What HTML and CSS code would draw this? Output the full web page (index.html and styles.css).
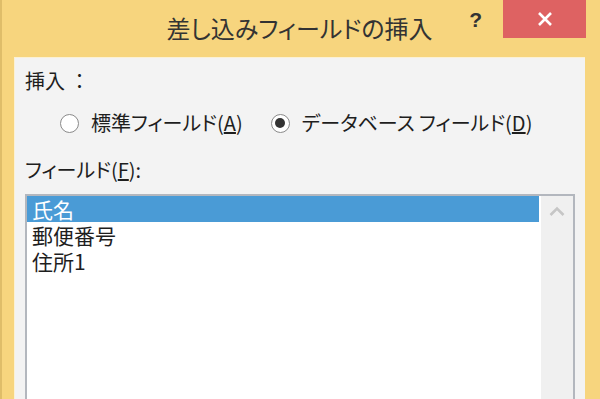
FILE: index.html
```html
<!DOCTYPE html>
<html lang="ja">
<head>
    <meta charset="UTF-8">
    <title>差し込みフィールドの挿入</title>
    <link rel="stylesheet" href="styles.css">
</head>
<body>
    <div class="window">
        <div class="titlebar">
            <div></div>
            <div class="title">差し込みフィールドの挿入</div>
            <div class="controls">
                <span class="help">?</span>
                <span class="close">
                    <svg width="16" height="14" viewBox="0 0 16 14">
                        <path d="M2 1 L14 13 M14 1 L2 13" stroke="#fff" stroke-width="2.6" fill="none"/>
                    </svg>
                </span>
            </div>
        </div>

        <div class="panel">
            <div class="group-label">挿入 ：</div>
            <div class="radios">
                <label class="radio"><span class="circle"></span><span>標準フィールド(<u>A</u>)</span></label>
                <label class="radio checked"><span class="circle"></span><span>データベース フィールド(<u>D</u>)</span></label>
            </div>
            <div class="field-label">フィールド(<u>F</u>):</div>
            <div class="listbox">
                <ul class="items">
                    <li class="selected">氏名</li>
                    <li>郵便番号</li>
                    <li>住所1</li>
                </ul>
                <div class="scrollbar">
                    <svg width="16" height="10" viewBox="0 0 16 10">
                        <polyline points="1.5,9 8,2.5 14.5,9" stroke="#c6c6c6" stroke-width="2.6" fill="none"/>
                    </svg>
                </div>
            </div>
        </div>
    </div>
</body>
</html>
```

FILE: styles.css
```css
body {
    margin: 0;
    font-family: "Noto Sans CJK JP", "Liberation Sans", sans-serif;
    font-feature-settings: "palt";
    color: #1e1e1e;
    overflow: hidden;
}

.window {
    width: 600px;
    height: 399px;
    box-sizing: border-box;
    padding: 0 15px 0 14px;
    display: flex;
    flex-direction: column;
    background-color: #f7d57e;
    box-shadow: inset 2px 0 0 #dfbd69;
    overflow: hidden;
}

/* barra de titulo */
.titlebar {
    height: 57px;
    flex-shrink: 0;
    display: grid;
    grid-template-columns: 1fr auto 1fr;
}

.title {
    padding-top: 13px;
    font-size: 24px;
    line-height: 30px;
    color: #333;
    white-space: nowrap;
}

.controls {
    display: flex;
    justify-content: flex-end;
    align-items: flex-start;
    margin-right: -1px;
}

.help {
    margin: 8px 21px 0 0;
    font-family: "Liberation Sans", sans-serif;
    font-weight: bold;
    font-size: 21px;
    line-height: 24px;
    color: #333;
}

.close {
    width: 83px;
    height: 38px;
    display: flex;
    justify-content: center;
    align-items: center;
    background-color: #de6262;
}

/* contenido */
.panel {
    flex: 1;
    padding: 10px 10px 0 11px;
    background-color: #f3f3f3;
    box-shadow: inset 1px 1px 0 #fbf1d4;
}

.group-label, .field-label, .radio {
    font-size: 20px;
    line-height: 28px;
    white-space: nowrap;
}

.group-label {
    font-feature-settings: normal;
}

.radios {
    display: flex;
    gap: 28px;
    margin-top: 14px;
    padding-left: 35px;
}

.radio {
    display: flex;
    align-items: center;
    gap: 12px;
}

.circle {
    width: 17px;
    height: 17px;
    border: 1.5px solid #8a8a8a;
    border-radius: 50%;
    background-color: #fff;
    display: flex;
    justify-content: center;
    align-items: center;
}

.radio.checked .circle::after {
    content: "";
    width: 10px;
    height: 10px;
    border-radius: 50%;
    background-color: #333;
}

.field-label {
    margin-top: 19px;
}

.listbox {
    margin-top: 10px;
    height: 240px;
    display: flex;
    border: 2px solid #b3b7be;
    background-color: #fff;
}

.items {
    flex: 1;
    list-style: none;
    margin: 0 2px 0 0;
    padding: 0;
}

.items li {
    height: 26px;
    padding-left: 5px;
    font-size: 21px;
    line-height: 26px;
}

.items li.selected {
    background-color: #4a9bd6;
    color: #fff;
}

.scrollbar {
    width: 32px;
    background-color: #f0f0f0;
    display: flex;
    justify-content: center;
    align-items: flex-start;
    padding-top: 10px;
}
```
